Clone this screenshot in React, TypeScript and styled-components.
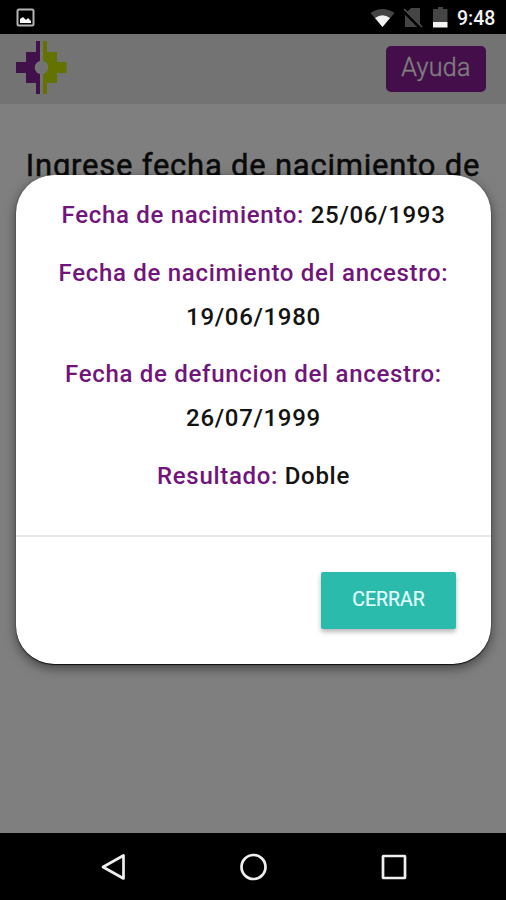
import React from "react";
import styled, { createGlobalStyle } from "styled-components";

const GlobalStyle = createGlobalStyle`
  * { box-sizing: border-box; }
  body { margin: 0; background: #000; font-family: Roboto, "Liberation Sans", sans-serif; }
`;

const Screen = styled.div`
  width: 506px;
  height: 900px;
  display: flex;
  flex-direction: column;
  overflow: hidden;
`;

const StatusBar = styled.header`
  height: 34px;
  flex: none;
  display: flex;
  align-items: center;
  background: #000;
  padding: 1px 10px 0 16px;
`;

const StatusIcons = styled.div`
  display: flex;
  align-items: center;
  margin-left: auto;
`;

const Clock = styled.span`
  width: 39px;
  margin-left: 9px;
  color: #f2f2f2;
  font-size: 19.5px;
  font-weight: 500;
  line-height: 34px;
  white-space: nowrap;
  padding-top: 3px;
`;

const Content = styled.div`
  position: relative;
  flex: 1;
  display: flex;
  flex-direction: column;
  background: #fff;
  overflow: hidden;
`;

const AppBar = styled.div`
  height: 70px;
  flex: none;
  display: flex;
  align-items: flex-start;
  justify-content: space-between;
  background: #e7e7e7;
  padding: 7px 20px 0 16px;
`;

const HelpButton = styled.button`
  width: 100px;
  height: 46px;
  margin-top: 5px;
  padding: 0 0 3px;
  border: 0;
  border-radius: 5px;
  background: #861c92;
  color: #fff;
  font: 300 25px/40px Roboto, sans-serif;
  letter-spacing: 0.3px;
  -webkit-text-stroke: 0.3px #fff;
`;

const Title = styled.h1`
  margin: 41px 0 0;
  color: #151515;
  font-size: 31px;
  font-weight: 400;
  line-height: 42px;
  letter-spacing: 0.77px;
  -webkit-text-stroke: 0.5px #151515;
  text-align: center;
  white-space: nowrap;
`;

const Backdrop = styled.div`
  position: absolute;
  inset: 0;
  display: flex;
  align-items: flex-start;
  justify-content: center;
  padding: 141px 15px 0 16px;
  background: rgba(0, 0, 0, 0.5);
`;

const Dialog = styled.section`
  width: 475px;
  height: 489px;
  display: flex;
  flex-direction: column;
  border-radius: 38px;
  background: #fff;
  box-shadow: 0 0 1px rgba(0, 0, 0, 0.6), 0 1px 1px rgba(0, 0, 0, 0.8), 0 4px 12px rgba(0, 0, 0, 0.5);
`;

const DialogBody = styled.div`
  height: 360px;
  padding: 19.2px 20px 0;
  text-align: center;
`;

const Entry = styled.p`
  margin: 0 0 14.5px;
  color: #131313;
  font-size: 24px;
  font-weight: 500;
  line-height: 43.4px;
  letter-spacing: 0.69px;
`;

const Label = styled.span`
  color: #71147b;
`;

const DialogFooter = styled.footer`
  flex: 1;
  display: flex;
  justify-content: flex-end;
  align-items: flex-start;
  border-top: 2px solid #e8e8e8;
  padding: 35px 35px 0;
`;

const CloseButton = styled.button`
  width: 135px;
  height: 57px;
  padding: 0 0 1px;
  border: 0;
  border-radius: 2px;
  background: #2bbbad;
  color: #e4fffc;
  font: 400 19.5px/54px Roboto, sans-serif;
  -webkit-text-stroke: 0.2px #e4fffc;
  box-shadow: 0 3px 5px rgba(0, 0, 0, 0.28);
`;

const NavBar = styled.nav`
  height: 67px;
  flex: none;
  display: grid;
  grid-template-columns: repeat(3, 140.5px);
  justify-content: center;
  justify-items: center;
  align-items: center;
  background: #000;
`;

const Logo = () => (
  <svg width="51" height="54" viewBox="0 0 51 54">
    <path d="M20 0h4v53h-4V42H10V32H0V21h10V11h10z" fill="#852094" />
    <path d="M27 0h4v11h10v10h9.500v11H41v10H31v11h-4z" fill="#c8e600" />
    <circle cx="25.500" cy="26.500" r="6.800" fill="#e7e7e7" />
  </svg>
);

const PictureIcon = () => (
  <svg width="19" height="19" viewBox="0 0 19 19">
    <rect x="1.500" y="1.500" width="16" height="16" rx="1.500" fill="none" stroke="#b4b4b4" strokeWidth="2" />
    <path d="M4 15V11l3-2 3 3 2-2 3 3v2z" fill="#fff" />
  </svg>
);

const WifiIcon = () => (
  <svg width="25" height="20" viewBox="0 0 25 20">
    <path d="M.500 5Q12.500-3 24.500 5L12.500 19z" fill="#454545" />
    <path d="M5 10Q12.500 4.500 20 10l-7.500 9z" fill="#f4f4f4" />
  </svg>
);

const NoSimIcon = () => (
  <svg width="20" height="20" viewBox="0 0 20 20">
    <path d="M8 0h9v19H2V6z" fill="#454545" />
    <path d="M0 2l18 18" stroke="#000" strokeWidth="4" />
    <path d="M1 1l18 18" stroke="#555" strokeWidth="1.500" />
  </svg>
);

const BatteryIcon = () => (
  <svg width="15" height="21" viewBox="0 0 15 21">
    <path d="M0 2h5V0h5v2h4.500v13H0z" fill="#454545" />
    <path d="M0 15h14.500v5.500H0z" fill="#f4f4f4" />
  </svg>
);

const NavIcon = styled.svg`
  width: 28px;
  height: 28px;
  fill: none;
  stroke: #efefef;
  stroke-width: 2.7;
  stroke-linejoin: round;
`;

const results = [
  { label: "Fecha de nacimiento:", value: "25/06/1993" },
  { label: "Fecha de nacimiento del ancestro:", value: "19/06/1980" },
  { label: "Fecha de defuncion del ancestro:", value: "26/07/1999" },
  { label: "Resultado:", value: "Doble" },
];

const WifiSlot = styled.span`
  display: flex;
  margin-right: 8px;
`;
const SimSlot = styled.span`
  display: flex;
  margin-right: 10px;
`;

export default function App() {
  return (
    <Screen>
      <GlobalStyle />
      <StatusBar>
        <PictureIcon />
        <StatusIcons>
          <WifiSlot><WifiIcon /></WifiSlot>
          <SimSlot><NoSimIcon /></SimSlot>
          <BatteryIcon />
          <Clock>9:48</Clock>
        </StatusIcons>
      </StatusBar>
      <Content>
        <AppBar>
          <Logo />
          <HelpButton>Ayuda</HelpButton>
        </AppBar>
        <Title>Ingrese fecha de nacimiento de</Title>
        <Backdrop>
          <Dialog role="dialog">
            <DialogBody>
              {results.map(({ label, value }) => (
                <Entry key={label}>
                  <Label>{label}</Label> {value}
                </Entry>
              ))}
            </DialogBody>
            <DialogFooter>
              <CloseButton>CERRAR</CloseButton>
            </DialogFooter>
          </Dialog>
        </Backdrop>
      </Content>
      <NavBar>
        <NavIcon viewBox="0 0 28 28"><path d="M4 14L24.500 2.500v23z" /></NavIcon>
        <NavIcon viewBox="0 0 28 28"><circle cx="14.500" cy="14" r="12" /></NavIcon>
        <NavIcon viewBox="0 0 28 28"><rect x="3" y="3" width="22" height="22" rx=".5" /></NavIcon>
      </NavBar>
    </Screen>
  );
}
